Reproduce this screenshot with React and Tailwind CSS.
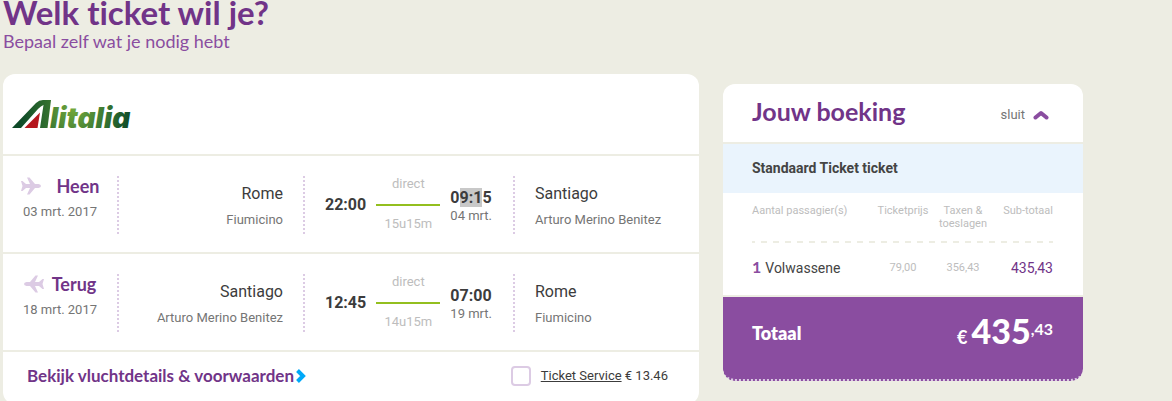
import React, { useState } from "react";

const flights = [
  {
    id: "heen", label: "Heen", date: "03 mrt. 2017", duration: "15u15m",
    from: { city: "Rome", airport: "Fiumicino", time: "22:00" },
    to: { city: "Santiago", airport: "Arturo Merino Benitez", time: "09:15", date: "04 mrt." },
  },
  {
    id: "terug", label: "Terug", date: "18 mrt. 2017", duration: "14u15m",
    from: { city: "Santiago", airport: "Arturo Merino Benitez", time: "12:45" },
    to: { city: "Rome", airport: "Fiumicino", time: "07:00", date: "19 mrt." },
  },
];

function AlitaliaLogo() {
  return (
    <svg width="122" height="30" viewBox="0 0 122 30" className="overflow-visible" role="img" aria-label="Alitalia">
      <defs>
        <linearGradient id="mark" x1="0" x2="40" y1="0" y2="0" gradientUnits="userSpaceOnUse">
          <stop offset="0.2" stopColor="#0e4a28" />
          <stop offset="1" stopColor="#37752f" />
        </linearGradient>
        <radialGradient id="word" cx="62" cy="10" r="58" gradientUnits="userSpaceOnUse">
          <stop offset="0" stopColor="#73a83c" />
          <stop offset="0.5" stopColor="#3f7c33" />
          <stop offset="1" stopColor="#0e4a28" />
        </radialGradient>
      </defs>
      <path d="M0 29 L24 4 Q27 1 31 1 H39 L35.500 29 H28 L31.500 6 Q29 7 26 10 L9 29 Z" fill="url(#mark)" />
      <path d="M12.500 29 L28 13.500 L25.500 29 Z" fill="#b5161d" />
      <text x="38" y="29" fill="url(#word)" className="font-['Inter'] text-[28px] font-black italic">litalia</text>
    </svg>
  );
}

function Plane({ back }) {
  return (
    <svg width="20" height="18" viewBox="0 0 20 18" fill="#dccbe4" className={back ? "-scale-x-100" : ""} aria-hidden="true">
      <path d="M0 4 H1.500 L5 7 H9 L6 .5 H8.500 L14 7 H17.500 Q20 7.500 20 9 Q20 10.500 17.500 11 H14 L8.500 17.500 H6 L9 11 H5 L1.500 14 H0 L1.500 9 Z" />
    </svg>
  );
}

function FlightRow({ flight }) {
  const { from, to } = flight;
  const back = flight.id === "terug";
  return (
    <div className="flex items-center border-t-2 border-[#edede3] pt-5 pb-[18px]">
      <div className="h-[58px] w-29 shrink-0 border-r-2 border-dotted border-[#dccbe4] text-center">
        <div className={`flex items-center justify-center ${back ? "gap-2" : "gap-4"}`}>
          <Plane back={back} />
          <h2 className="font-['Lato'] text-lg leading-5 font-bold text-[#713488]">{flight.label}</h2>
        </div>
        <p className="mt-2 text-[13px] leading-4 text-[#757575]">{flight.date}</p>
      </div>

      <div className="h-[58px] w-[186px] shrink-0 border-r-2 border-dotted border-[#dccbe4] pt-2 pr-5 text-right">
        <p className="text-base leading-5">{from.city}</p>
        <p className="mt-2 text-[13px] leading-4 text-[#757575]">{from.airport}</p>
      </div>

      <div className="flex h-[58px] w-[210px] shrink-0 items-center justify-between border-r-2 border-dotted border-[#dccbe4] pr-[21px] pl-5">
        <p className="text-base leading-5 font-bold">{from.time}</p>
        <div className="w-16 text-center text-[13px] leading-4 text-[#bdbdbd]">
          <p>direct</p>
          <div className="mt-3 mb-2.5 h-[2px] bg-[#93bf1f]" />
          <p className="pb-0.5">{flight.duration}</p>
        </div>
        <div className="pt-0.5">
          <p className="text-base leading-5 font-bold">
            {back ? to.time : <>0<span className="bg-[#c8c8c8]">9:1</span>5</>}
          </p>
          <p className="text-[13px] leading-4 text-[#757575]">{to.date}</p>
        </div>
      </div>

      <div className="h-[58px] flex-1 pt-2 pl-5">
        <p className="text-base leading-5">{to.city}</p>
        <p className="mt-2 text-[13px] leading-4 text-[#757575]">{to.airport}</p>
      </div>
    </div>
  );
}

function Booking({ onClose }) {
  return (
    <aside className="mt-[84px] w-90 shrink-0 overflow-hidden rounded-xl">
      <div className="flex items-center justify-between border-b-2 border-[#edede3] bg-white pt-3 pr-[30px] pb-4 pl-[29px]">
        <h2 className="font-['Lato'] text-[25px] leading-[30px] font-bold text-[#713488]">Jouw boeking</h2>
        <button onClick={onClose} className="flex items-center gap-2 pt-2 pr-1 text-[13px] leading-4 text-[#757575]">
          sluit
          <svg width="16" height="10" viewBox="0 0 16 10" fill="none" stroke="#8a4da0" strokeWidth="4" strokeLinecap="round" strokeLinejoin="round" aria-hidden="true">
            <path d="M2.500 7.500 L8 3 L13.500 7.500" />
          </svg>
        </button>
      </div>
      <h3 className="bg-[#eaf4fd] py-4 pr-[30px] pl-[29px] text-sm leading-[17px] font-bold text-[#444]">Standaard Ticket ticket</h3>
      <div className="border-b-2 border-[#edede3] bg-white pt-[11px] pr-[30px] pb-[17px] pl-[29px]">
        <table className="w-full border-collapse text-[11px] leading-[13px] text-[#bdbdbd]">
          <thead>
            <tr className="bg-[repeating-linear-gradient(90deg,#edede3_0_3px,transparent_3px_9px,#edede3_9px_12px)] bg-[length:100%_2px] bg-bottom bg-no-repeat align-top">
              <th className="pb-[13px] text-left font-normal">Aantal passagier(s)</th>
              <th className="w-15 pb-[13px] text-center font-normal">Ticketprijs</th>
              <th className="w-15 pb-[13px] text-center font-normal">Taxen &amp; toeslagen</th>
              <th className="w-15 pb-[13px] text-right font-normal">Sub-totaal</th>
            </tr>
          </thead>
          <tbody>
            <tr className="align-middle">
              <td className="pt-3.5 text-sm text-[#444]">
                <div className="flex items-baseline gap-1 leading-5">
                  <span className="font-['Lato'] text-base leading-5 font-bold text-[#8a4da0]">1</span>
                  <span>Volwassene</span>
                </div>
              </td>
              <td className="pt-3.5 text-center">79,00</td>
              <td className="pt-3.5 text-center">356,43</td>
              <td className="pt-3.5 text-right text-sm leading-5 text-[#713488]">435,43</td>
            </tr>
          </tbody>
        </table>
      </div>
      <div className="flex h-[84px] items-start justify-between rounded-b-xl border-b-2 border-dotted border-[#dccbe4] bg-[#8a4da0] pt-4 pr-[30px] pl-[29px] font-['Lato'] font-bold text-white">
        <p className="pt-2 text-lg leading-6 font-extrabold">Totaal</p>
        <p className="flex items-baseline leading-9">
          <span className="mr-1 text-lg leading-9">€</span>
          <span className="text-[34px] leading-9 font-black">435</span>
          <span className="self-start text-base leading-8">,43</span>
        </p>
      </div>
    </aside>
  );
}

export default function App() {
  const [service, setService] = useState(false);
  const [open, setOpen] = useState(true);

  return (
    <div className="min-h-screen bg-[#edede3] pl-[3px] font-['Roboto',sans-serif] text-[#3c3c3c]">
      <div className="flex max-w-[1080px] items-start gap-6">
        <main className="min-w-0 flex-1">
          <h1 className="font-['Lato'] text-[33px] leading-6 font-bold text-[#713488] [font-variant-ligatures:none]">Welk ticket wil je?</h1>
          <p className="mt-2 font-['Lato'] text-lg leading-[18px] text-[#8a4da0]">Bepaal zelf wat je nodig hebt</p>

          <section className="mt-6 rounded-xl bg-white">
            <div className="h-20 px-[9px] pt-[25px]">
              <AlitaliaLogo />
            </div>
            {flights.map(f => <FlightRow key={f.id} flight={f} />)}
            <div className="flex items-center justify-between border-t-2 border-[#edede3] pt-3.5 pr-[31px] pb-[18px] pl-6">
              <a href="#details" className="flex items-center gap-0.5 font-['Lato'] text-[17px] leading-5 font-bold text-[#713488]">
                Bekijk vluchtdetails &amp; voorwaarden
                <svg width="10" height="14" viewBox="0 0 10 14" fill="none" stroke="#00a9f9" strokeWidth="4" aria-hidden="true">
                  <path d="M1.500 1.500 L7 7 L1.500 12.500" />
                </svg>
              </a>
              <label className="flex items-center gap-[10px] text-[13px] leading-4">
                <input
                  type="checkbox"
                  checked={service}
                  onChange={e => setService(e.target.checked)}
                  className="size-5 appearance-none rounded border-2 border-[#dccbe4] bg-white checked:bg-[#8a4da0]"
                />
                <span><span className="underline">Ticket Service</span> € 13.46</span>
              </label>
            </div>
          </section>
        </main>
        {open && <Booking onClose={() => setOpen(false)} />}
      </div>
    </div>
  );
}
